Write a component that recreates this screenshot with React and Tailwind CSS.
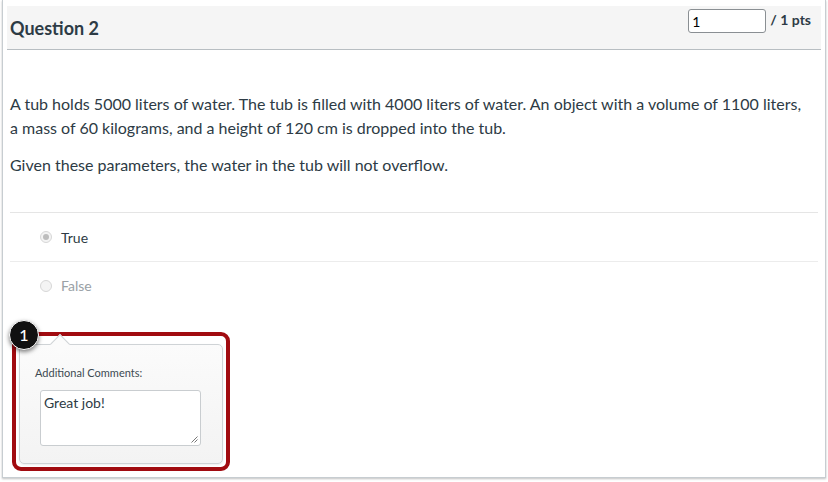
import React from 'react';

function Radio({ checked }) {
  return (
    <span className="flex h-[12px] w-[12px] items-center justify-center rounded-full border border-[#d7d7d7] bg-[#f4f4f4]">
      {checked ? <span className="h-[6px] w-[6px] rounded-full bg-[#bdbdbd]" /> : null}
    </span>
  );
}

function App() {
  return (
    <div className="h-[482px] w-[828px] overflow-hidden bg-white px-[2px] font-['Lato','Open_Sans',sans-serif] text-[#2d3b45]">
      <div className="box-border h-[478px] w-[824px] border-x border-b border-[#c7cdd1] bg-white px-[4px] pt-[6px] shadow-[0_1px_2px_rgba(0,0,0,0.25)]">
        <div className="box-border flex h-[44px] items-start justify-between border-b border-[#b8bec2] bg-[#f5f5f5] pl-[3px] pr-[10px] pt-[3px]">
          <h2 className="mt-[7px] text-[18px] font-bold leading-[24px]">Question 2</h2>
          <div className="flex items-start gap-[4px]">
            <div className="box-border flex h-[24px] w-[78px] items-center rounded-[3px] border border-[#8a8f93] bg-white px-[3px] text-[14px] text-black">
              1
            </div>
            <span className="mt-[2px] text-[14px] font-bold leading-[18px]">/ 1 pts</span>
          </div>
        </div>

        <div className="px-[3px] pt-[42px]">
          <p className="w-[795px] text-[16px] leading-[24px]">
            A tub holds 5000 liters of water. The tub is filled with 4000 liters of water. An object with a volume of 1100 liters, a mass of 60 kilograms, and a height of 120 cm is dropped into the tub.
          </p>
          <p className="mt-[13px] text-[16px] leading-[24px]">
            Given these parameters, the water in the tub will not overflow.
          </p>

          <div className="mt-[35px] border-t border-[#e5e5e5]">
            <div className="flex h-[48px] items-center gap-[9px] pl-[30px] text-[14px]">
              <Radio checked />
              <span>True</span>
            </div>
            <div className="flex h-[48px] items-center gap-[9px] border-t border-[#ececec] pl-[30px] text-[14px] text-[#9aa1a6]">
              <Radio />
              <span>False</span>
            </div>
          </div>

          <div className="relative ml-[2px] mt-[23px] box-border h-[139px] w-[218px] rounded-[9px] border-[4px] border-[#a10b10] px-[3px] pb-[3px] pt-[8px]">
            <div className="relative box-border h-full rounded-[5px] border border-[#cfd3d6] bg-gradient-to-b from-[#fbfbfb] to-[#f3f3f3] pl-[15px] pt-[21px] shadow-[0_1px_2px_rgba(0,0,0,0.08)]">
              <span className="absolute left-[33px] top-[-8px] h-[14px] w-[14px] rotate-45 border-l border-t border-[#cfd3d6] bg-[#fbfbfb]" />
              <div className="text-[11px] leading-[14px] text-[#3d4a52]">Additional Comments:</div>
              <div className="relative ml-[5px] mt-[10px] box-border h-[56px] w-[161px] rounded-[3px] border border-[#c9cdd0] bg-white px-[3px] pt-[3px] text-[14px] leading-[18px]">
                Great job!
                <svg className="absolute bottom-[2px] right-[2px]" width="7" height="7" viewBox="0 0 7 7">
                  <path d="M6.5 0.5 L0.5 6.5 M6.5 3.5 L3.5 6.5" stroke="#777" strokeWidth="1" fill="none" />
                </svg>
              </div>
            </div>
            <div className="absolute left-[-7px] top-[-16px] flex h-[30px] w-[30px] items-center justify-center rounded-full border-[1.5px] border-white bg-[#111] text-[16px] font-medium text-white shadow-[0_2px_4px_rgba(0,0,0,0.5)]">
              1
            </div>
          </div>
        </div>
      </div>
    </div>
  );
}

export default App;
